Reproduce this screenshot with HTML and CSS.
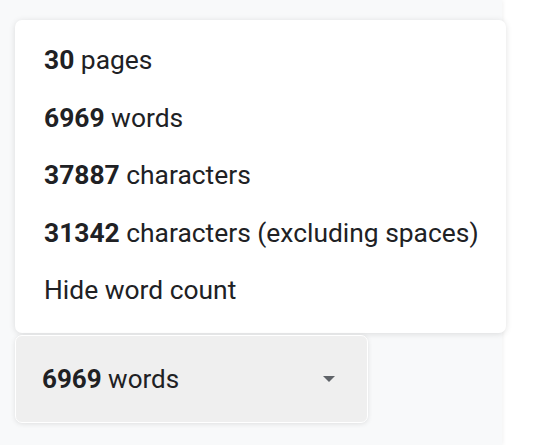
FILE: index.html
```html
<!DOCTYPE html>
<html lang="en">
<head>
  <meta charset="UTF-8">
  <meta name="viewport" content="width=device-width, initial-scale=1">
  <title>Word count</title>
  <link rel="stylesheet" href="styles.css">
</head>
<body>

<div class="panel">
  <ul class="count-menu">
    <li><b>30</b> pages</li>
    <li><b>6969</b> words</li>
    <li><b>37887</b> characters</li>
    <li><b>31342</b> characters (excluding spaces)</li>
    <li>Hide word count</li>
  </ul>

  <button class="count-button">
    <span><b>6969</b> words</span>
    <svg class="caret" width="12" height="6" viewBox="0 0 12 6"><path d="M0 0h12L6 6z" fill="#5f6368"/></svg>
  </button>
</div>

</body>
</html>
```

FILE: styles.css
```css
body {
  margin: 0;
  background: #fff;
  font-family: Roboto, "Liberation Sans", sans-serif;
  color: #202124;
}
.panel {
  width: 487px;
  height: 425px;
  padding: 20px 0 0 15px;
  background: #f8f9fa;
  box-shadow: 1px 0 4px rgba(0, 0, 0, 0.06);
}
.count-menu {
  list-style: none;
  margin: 0;
  width: 491px;
  box-sizing: border-box;
  padding: 12px 0 13px 29px;
  background: #fff;
  border-radius: 7px;
  box-shadow: 0 1px 6px rgba(0, 0, 0, 0.12);
  font-size: 26.4px;
}
.count-menu li {
  height: 57.5px;
  line-height: 57.5px;
}
.count-button {
  display: flex;
  align-items: center;
  justify-content: space-between;
  margin-top: 2px;
  width: 353px;
  height: 88px;
  padding: 0 32px 0 26px;
  background: #efefef;
  border: 1px solid #fff;
  border-radius: 7px;
  box-shadow: 0 1px 5px rgba(0, 0, 0, 0.1);
  font-family: inherit;
  font-size: 26px;
  color: #202124;
}
```
